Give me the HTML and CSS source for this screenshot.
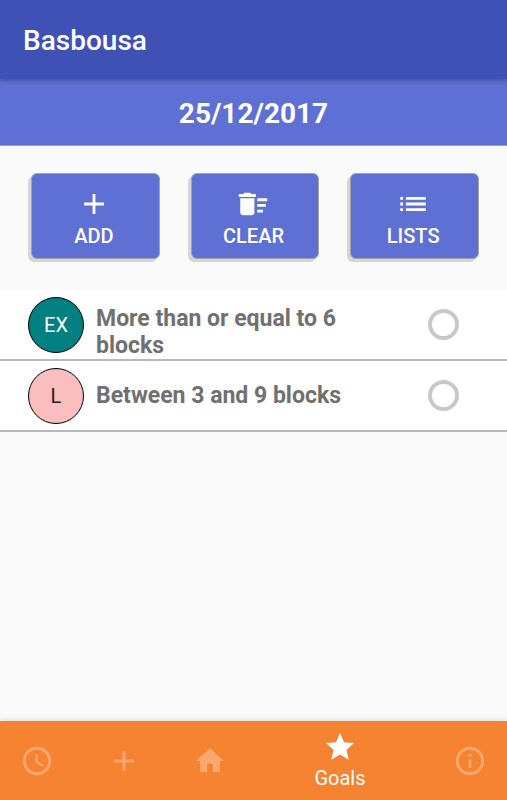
FILE: index.html
```html
<!DOCTYPE html>
<html lang="en">
<head>
<meta charset="utf-8">
<meta name="viewport" content="width=device-width, initial-scale=1">
<title>Basbousa</title>
<link rel="stylesheet" href="styles.css">
</head>
<body>
<header class="app-bar"><h1 class="app-title">Basbousa</h1></header>
<main class="content">
  <h2 class="date-bar">25/12/2017</h2>
  <div class="actions">
    <button class="action" type="button">
      <svg class="icon" viewBox="0 0 24 24" aria-hidden="true"><path d="M19 13h-6v6h-2v-6H5v-2h6V5h2v6h6v2z"/></svg>
      <span>ADD</span>
    </button>
    <button class="action" type="button">
      <svg class="icon" viewBox="0 0 24 24" aria-hidden="true"><path d="M15 16h4v2h-4zm0-8h7v2h-7zm0 4h6v2h-6zM3 18c0 1.1.9 2 2 2h6c1.1 0 2-.9 2-2V8H3v10zM14 5h-3l-1-1H6L5 5H2v2h12z"/></svg>
      <span>CLEAR</span>
    </button>
    <button class="action" type="button">
      <svg class="icon" viewBox="0 0 24 24" aria-hidden="true"><path d="M3 13h2v-2H3v2zm0 4h2v-2H3v2zm0-8h2V7H3v2zm4 4h14v-2H7v2zm0 4h14v-2H7v2zM7 7v2h14V7H7z"/></svg>
      <span>LISTS</span>
    </button>
  </div>
  <ul class="goals">
    <li class="goal">
      <span class="badge badge-exercise">EX</span>
      <label class="goal-name goal-name-long" for="goal-1">More than or equal to 6 blocks</label>
      <input class="goal-check" type="checkbox" id="goal-1">
    </li>
    <li class="goal">
      <span class="badge badge-lunch">L</span>
      <label class="goal-name" for="goal-2">Between 3 and 9 blocks</label>
      <input class="goal-check" type="checkbox" id="goal-2">
    </li>
  </ul>
</main>
<nav class="bottom-nav">
  <div class="tabs">
    <a class="tab" href="#history" aria-label="History"><svg class="icon" viewBox="0 0 24 24" aria-hidden="true"><path d="M11.99 2C6.47 2 2 6.48 2 12s4.47 10 9.99 10C17.52 22 22 17.52 22 12S17.52 2 11.99 2zM12 20c-4.42 0-8-3.58-8-8s3.58-8 8-8 8 3.58 8 8-3.58 8-8 8zm.5-13H11v6l5.25 3.15.75-1.23-4.5-2.67z"/></svg></a>
    <a class="tab" href="#add" aria-label="Add"><svg class="icon" viewBox="0 0 24 24" aria-hidden="true"><path d="M19 13h-6v6h-2v-6H5v-2h6V5h2v6h6v2z"/></svg></a>
    <a class="tab" href="#home" aria-label="Home"><svg class="icon" viewBox="0 0 24 24" aria-hidden="true"><path d="M10 20v-6h4v6h5v-8h3L12 3 2 12h3v8z"/></svg></a>
    <a class="tab tab-active" href="#goals" aria-current="page"><svg class="icon" viewBox="0 0 24 24" aria-hidden="true"><path d="M12 17.27L18.18 21l-1.64-7.03L22 9.24l-7.19-.61L12 2 9.19 8.63 2 9.24l5.46 4.73L5.82 21z"/></svg><span>Goals</span></a>
    <a class="tab" href="#about" aria-label="About"><svg class="icon" viewBox="0 0 24 24" aria-hidden="true"><path d="M11 17h2v-6h-2v6zm1-15C6.48 2 2 6.48 2 12s4.48 10 10 10 10-4.48 10-10S17.52 2 12 2zm0 18c-4.41 0-8-3.59-8-8s3.59-8 8-8 8 3.59 8 8-3.59 8-8 8zM11 9h2V7h-2v2z"/></svg></a>
  </div>
</nav>
</body>
</html>
```
FILE: styles.css
```css
* { box-sizing: border-box; }

body {
  margin: 0;
  min-height: 100vh;
  display: flex;
  flex-direction: column;
  background: #fafafa;
  font-family: Roboto, sans-serif;
}

.icon {
  width: 34px;
  height: 34px;
  fill: currentColor;
  flex: none;
}

.app-bar {
  position: relative;
  padding: 23px 23px 20px;
  background: #3f51b5;
  color: #fff;
  box-shadow: 0 1px 5px rgba(0, 0, 0, 0.35);
}

.app-title {
  margin: 0;
  font-size: 28px;
  line-height: 36px;
  font-weight: 500;
}

.content { flex: 1; }

.date-bar {
  margin: 0;
  padding: 17px 0 13px;
  background: #5e70d4;
  border-bottom: 1px solid #a3a3a8;
  color: #fff;
  font-size: 28px;
  line-height: 36px;
  font-weight: 700;
  text-align: center;
}

.actions {
  display: grid;
  grid-template-columns: repeat(3, 1fr);
  gap: 31px;
  padding: 27px 28px 31px 31px;
}

.action {
  display: flex;
  flex-direction: column;
  align-items: center;
  gap: 1px;
  padding: 13px 3px 8px 0;
  border: 1px solid #a3a3a8;
  border-radius: 6px;
  background: #5e70d4;
  box-shadow: -3px 3px 0 #d5d5d5;
  color: #fff;
  font-family: inherit;
  font-size: 20px;
  line-height: 28px;
  font-weight: 500;
}

.goals {
  margin: 0;
  padding: 0;
  list-style: none;
}

.goal {
  display: grid;
  grid-template-columns: 56px 1fr 127px;
  column-gap: 12px;
  align-items: center;
  min-height: 71px;
  padding-left: 28px;
  background: #fff;
  border-bottom: 2px solid #b8b8b8;
}

.goal-name {
  margin-right: -12px;
  color: #707070;
  font-size: 23px;
  line-height: 27px;
  font-weight: 700;
}

.goal-name-long { padding-top: 14px; }

.badge {
  display: flex;
  align-items: center;
  justify-content: center;
  height: 56px;
  border: 1px solid #000;
  border-radius: 50%;
  font-size: 20px;
}

.badge-exercise {
  background: #008080;
  color: #fff;
}

.badge-lunch {
  background: #fabebe;
  color: #222;
}

.goal-check {
  appearance: none;
  justify-self: center;
  width: 31px;
  height: 31px;
  margin: 0;
  border: 4px solid #c8c8c8;
  border-radius: 50%;
  background: #fff;
}

.goal-check:checked { background: #5e70d4; }

.bottom-nav {
  overflow: hidden;
  background: #f58331;
  box-shadow: 0 -1px 6px rgba(0, 0, 0, 0.12);
}

.tabs {
  display: grid;
  grid-template-columns: 1fr 1fr 1fr 2fr 1fr;
  margin: 0 -6px;
  min-height: 79px;
}

.tab {
  display: flex;
  flex-direction: column;
  align-items: center;
  justify-content: center;
  color: #f9a86f;
  font-size: 20px;
  line-height: 28px;
  text-decoration: none;
}

.tab-active { color: #fff; }
```
